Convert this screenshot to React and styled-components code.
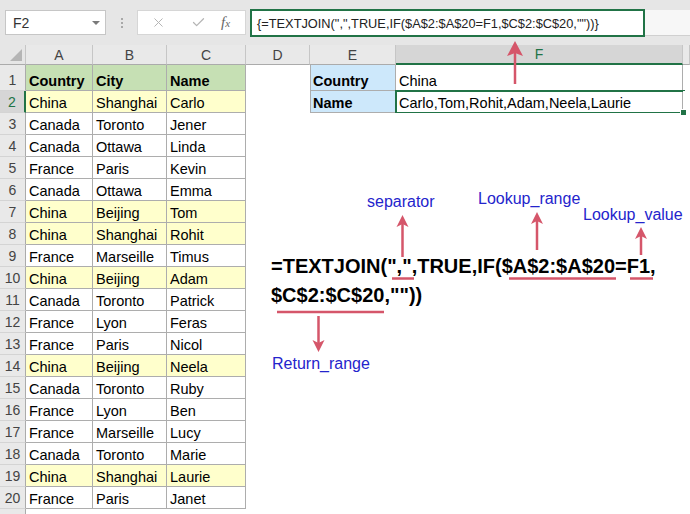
import React from "react";
import styled, { createGlobalStyle } from "styled-components";
import { X, Check } from "lucide-react";

const GlobalStyle = createGlobalStyle`
  body {
    margin: 0;
    background: #fff;
  }
`;

const GREEN = "#217346";
const RED = "#d5566a";
const BLUE = "#2424cc";

const fills = {
  green: "#c6e0b4",
  yellow: "#ffffcc",
  blue: "#cde8fb",
};

const Page = styled.div`
  position: relative;
  width: 690px;
  height: 514px;
  overflow: hidden;
  background: #fff;
  font-family: "Liberation Sans", Arial, sans-serif;
`;

const Toolbar = styled.div`
  display: flex;
  align-items: flex-start;
  height: 45px;
  box-sizing: border-box;
  padding: 10px 0 0 5px;
  background: #e6e6e6;
`;

const NameBox = styled.div`
  width: 101px;
  height: 25px;
  box-sizing: border-box;
  display: flex;
  align-items: center;
  justify-content: space-between;
  padding: 0 5px 0 7px;
  background: #fff;
  border: 1px solid #c6c6c6;
  font-size: 14px;
  color: #333;
`;

const Caret = styled.span`
  width: 0;
  height: 0;
  border-left: 4px solid transparent;
  border-right: 4px solid transparent;
  border-top: 4px solid #7a7a7a;
`;

const Grip = styled.div`
  width: 31px;
  display: flex;
  flex-direction: column;
  align-items: center;
  gap: 2px;
  padding-top: 8px;
`;

const Dot = styled.span`
  width: 2px;
  height: 2px;
  background: #a8a8a8;
`;

const FuncBox = styled.div`
  width: 109px;
  height: 25px;
  box-sizing: border-box;
  display: flex;
  align-items: center;
  padding-left: 13px;
  background: #fff;
  border: 1px solid #d6d6d6;
  color: #b5b5b5;
`;

const FuncIcon = styled.span`
  display: flex;
  margin-left: ${(p) => p.$gap || 0}px;
`;

const Fx = styled.span`
  font-family: "Liberation Serif", "Times New Roman", serif;
  font-style: italic;
  font-size: 15px;
  color: #666;

  small {
    font-size: 11px;
  }
`;

const FormulaBar = styled.div`
  flex: 1;
  display: flex;
  margin-left: 4px;
  margin-top: -1px;
  height: 28px;
`;

const FormulaFocus = styled.div`
  width: 395px;
  height: 28px;
  box-sizing: border-box;
  display: flex;
  align-items: center;
  padding-left: 5px;
  background: #fff;
  border: 2px solid ${GREEN};
  font-size: 12.8px;
  color: #222;
  white-space: nowrap;
`;

const FormulaRest = styled.div`
  flex: 1;
  margin-top: 1px;
  height: 26px;
  box-sizing: border-box;
  background: #f7f7f7;
  border-bottom: 1px solid #d0d0d0;
`;

const Sheet = styled.div`
  display: grid;
  grid-template-columns: 26px 67px 74px 79px 64px 86px 287px 7px;
  grid-template-rows: 20px 26px repeat(20, 22px);
`;

const Corner = styled.div`
  display: flex;
  justify-content: flex-end;
  align-items: flex-end;
  padding: 0 3px 3px 0;
  background: #e6e6e6;
  border-right: 1px solid #c6c6c6;
  border-bottom: 1px solid #ababab;
`;

const CornerMark = styled.span`
  width: 0;
  height: 0;
  border-left: 12px solid transparent;
  border-bottom: 12px solid #b5b5b5;
`;

const ColHead = styled.div`
  display: flex;
  align-items: center;
  justify-content: center;
  box-sizing: border-box;
  font-size: 14px;
  color: ${(p) => (p.$selected ? GREEN : "#444")};
  background: ${(p) => (p.$selected ? "#d6d6d6" : "#e9e9e9")};
  border-right: 1px solid #c6c6c6;
  border-bottom: ${(p) => (p.$selected ? `2px solid ${GREEN}` : "1px solid #ababab")};
`;

const RowHead = styled.div`
  display: flex;
  align-items: flex-end;
  justify-content: center;
  box-sizing: border-box;
  padding-bottom: 2px;
  font-size: 14px;
  color: ${(p) => (p.$selected ? GREEN : "#444")};
  background: ${(p) => (p.$selected ? "#d6d6d6" : "#e9e9e9")};
  border-bottom: 1px solid #d4d4d4;
  border-right: ${(p) => (p.$selected ? `2px solid ${GREEN}` : "1px solid #ababab")};
`;

const Cell = styled.div`
  position: relative;
  display: flex;
  align-items: flex-end;
  box-sizing: border-box;
  padding: 0 3px 2px;
  font-size: 14.5px;
  font-weight: ${(p) => (p.$bold ? 700 : 400)};
  color: #000;
  white-space: nowrap;
  background: ${(p) => fills[p.$fill] || "#fff"};
  box-shadow: ${(p) =>
    p.$boxed
      ? `${p.$leftEdge ? "inset 1px 0 0 #adadad," : ""} inset -1px -1px 0 #adadad`
      : "none"};

  ${(p) =>
    p.$active &&
    `
    &::after {
      content: "";
      position: absolute;
      inset: -1px -2px -1px -1px;
      border: 2px solid ${GREEN};
    }
  `}
`;

const FillHandle = styled.span`
  position: absolute;
  right: -4px;
  bottom: -3px;
  width: 5px;
  height: 5px;
  background: ${GREEN};
  border: 1px solid #fff;
  z-index: 1;
`;

const Overlay = styled.div`
  position: absolute;
  inset: 0;
  pointer-events: none;
`;

const BigFormula = styled.div`
  position: absolute;
  left: 271px;
  top: 252px;
  font-size: 20px;
  font-weight: 700;
  line-height: 29px;
  color: #000;
  white-space: nowrap;
`;

const Label = styled.div`
  position: absolute;
  left: ${(p) => p.$x}px;
  top: ${(p) => p.$y}px;
  font-size: 16px;
  line-height: 18px;
  color: ${BLUE};
  white-space: nowrap;
`;

const Drawing = styled.svg`
  position: absolute;
  left: 0;
  top: 0;
`;

const rows = [
  ["Country", "City", "Name"],
  ["China", "Shanghai", "Carlo"],
  ["Canada", "Toronto", "Jener"],
  ["Canada", "Ottawa", "Linda"],
  ["France", "Paris", "Kevin"],
  ["Canada", "Ottawa", "Emma"],
  ["China", "Beijing", "Tom"],
  ["China", "Shanghai", "Rohit"],
  ["France", "Marseille", "Timus"],
  ["China", "Beijing", "Adam"],
  ["Canada", "Toronto", "Patrick"],
  ["France", "Lyon", "Feras"],
  ["France", "Paris", "Nicol"],
  ["China", "Beijing", "Neela"],
  ["Canada", "Toronto", "Ruby"],
  ["France", "Lyon", "Ben"],
  ["France", "Marseille", "Lucy"],
  ["Canada", "Toronto", "Marie"],
  ["China", "Shanghai", "Laurie"],
  ["France", "Paris", "Janet"],
];

const lookup = [
  ["Country", "China"],
  ["Name", "Carlo,Tom,Rohit,Adam,Neela,Laurie"],
];

const columns = ["A", "B", "C", "D", "E", "F", ""];

// arrow pointing up (dir -1) or down (dir 1) along x, tip at y
const ArrowHead = ({ x, y, dir = -1, w = 6, l = 12 }) => (
  <path
    d={`M${x},${y} L${x + w},${y - dir * l} L${x},${y - dir * (l - 3)} L${x - w},${y - dir * l} Z`}
    fill={RED}
  />
);

const Arrow = ({ x, from, to, w, l }) => {
  const dir = to < from ? -1 : 1;
  return (
    <g>
      <line x1={x} y1={from} x2={x} y2={to - dir * (l - 4)} stroke={RED} strokeWidth="2.5" />
      <ArrowHead x={x} y={to} dir={dir} w={w} l={l} />
    </g>
  );
};

const Underline = ({ x1, x2, y }) => (
  <line x1={x1} y1={y} x2={x2} y2={y} stroke={RED} strokeWidth="2.5" />
);

const Annotations = () => (
  <Overlay>
    <Drawing width="690" height="514" viewBox="0 0 690 514">
      <Arrow x={515} from={84} to={41} w={8} l={15} />
      <Arrow x={402.5} from={257} to={215} w={6} l={12} />
      <Arrow x={537} from={250} to={212} w={6} l={12} />
      <Arrow x={641} from={255} to={227} w={6} l={12} />
      <Arrow x={318.5} from={316} to={352} w={6} l={12} />
      <Underline x1={392} x2={414} y={278.5} />
      <Underline x1={509} x2={616} y={278.5} />
      <Underline x1={630} x2={653} y={278.5} />
      <Underline x1={277} x2={384} y={312} />
    </Drawing>
    <Label $x={367} $y={193}>separator</Label>
    <Label $x={478} $y={190}>Lookup_range</Label>
    <Label $x={583} $y={206}>Lookup_value</Label>
    <Label $x={272} $y={355}>Return_range</Label>
    <BigFormula>
      =TEXTJOIN(",",TRUE,IF($A$2:$A$20=F1,
      <br />
      $C$2:$C$20,""))
    </BigFormula>
  </Overlay>
);

const renderRow = (r) => {
  const data = rows[r - 1];
  const china = data && data[0] === "China";
  const fill = r === 1 ? "green" : china ? "yellow" : undefined;
  const side = lookup[r - 1];
  return (
    <React.Fragment key={r}>
      <RowHead $selected={r === 2}>{data ? r : ""}</RowHead>
      {[0, 1, 2].map((c) => (
        <Cell key={c} $boxed={!!data} $fill={data ? fill : undefined} $bold={r === 1}>
          {data ? data[c] : ""}
        </Cell>
      ))}
      <Cell />
      <Cell $boxed={!!side} $leftEdge $fill={side ? "blue" : undefined} $bold>
        {side ? side[0] : ""}
      </Cell>
      <Cell $boxed={!!side} $active={r === 2}>
        {side ? side[1] : ""}
        {r === 2 && <FillHandle />}
      </Cell>
      <Cell />
    </React.Fragment>
  );
};

const App = () => {
  return (
    <>
      <GlobalStyle />
      <Page>
        <Toolbar>
          <NameBox>
            F2
            <Caret />
          </NameBox>
          <Grip>
            <Dot />
            <Dot />
            <Dot />
          </Grip>
          <FuncBox>
            <FuncIcon>
              <X size={15} strokeWidth={1.6} />
            </FuncIcon>
            <FuncIcon $gap={25}>
              <Check size={15} strokeWidth={2} />
            </FuncIcon>
            <FuncIcon $gap={15}>
              <Fx>
                f<small>x</small>
              </Fx>
            </FuncIcon>
          </FuncBox>
          <FormulaBar>
            <FormulaFocus>{'{=TEXTJOIN(",",TRUE,IF($A$2:$A$20=F1,$C$2:$C$20,""))}'}</FormulaFocus>
            <FormulaRest />
          </FormulaBar>
        </Toolbar>
        <Sheet>
          <Corner>
            <CornerMark />
          </Corner>
          {columns.map((c, i) => (
            <ColHead key={i} $selected={c === "F"}>
              {c}
            </ColHead>
          ))}
          {Array.from({ length: 21 }, (_, i) => renderRow(i + 1))}
        </Sheet>
        <Annotations />
      </Page>
    </>
  );
};

export default App;
